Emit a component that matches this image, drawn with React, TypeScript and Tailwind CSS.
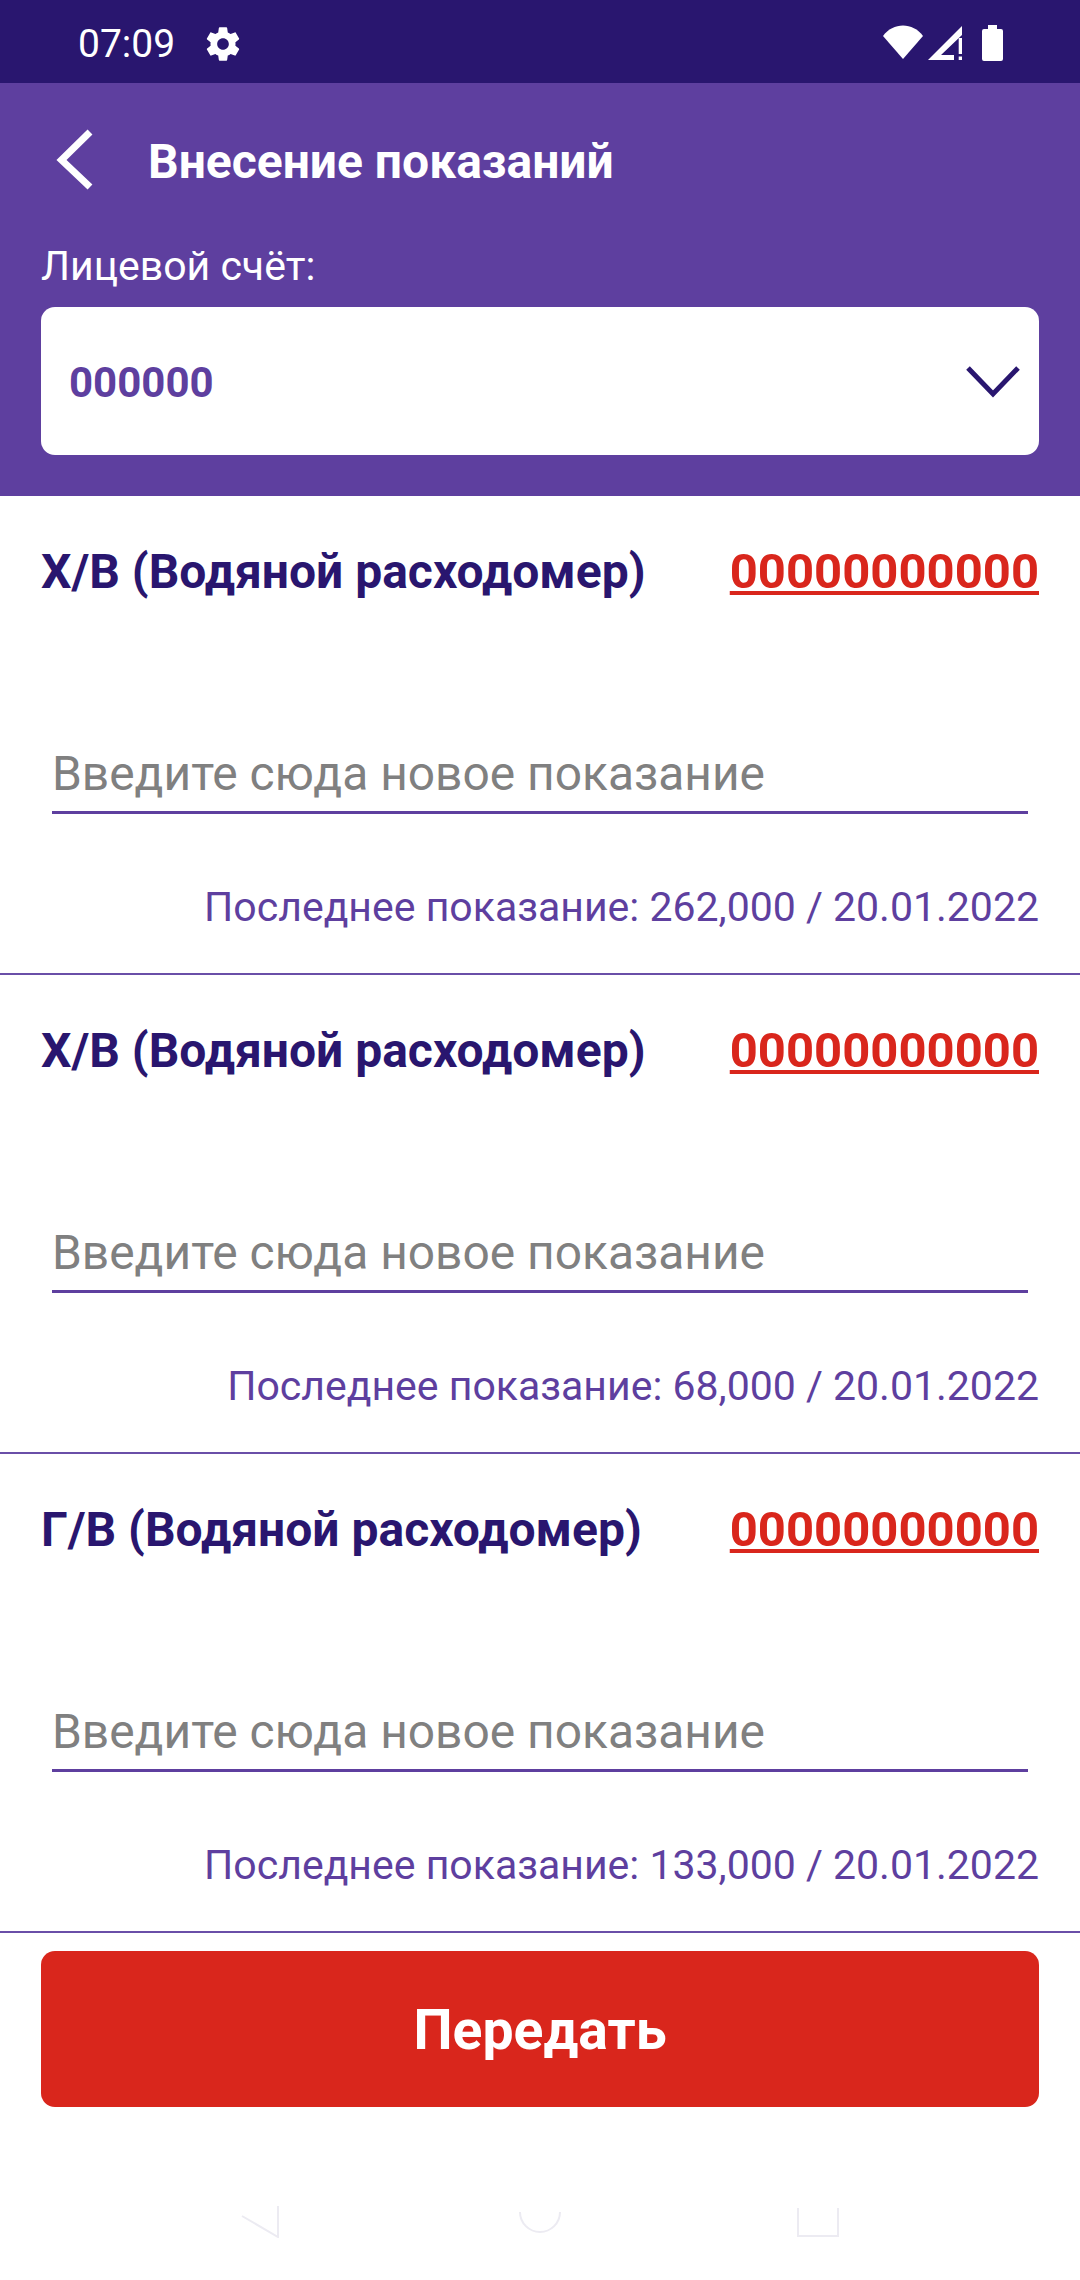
const meters = [
  { name: "Х/В (Водяной расходомер)", last: "262,000 / 20.01.2022" },
  { name: "Х/В (Водяной расходомер)", last: "68,000 / 20.01.2022" },
  { name: "Г/В (Водяной расходомер)", last: "133,000 / 20.01.2022" },
];

function StatusBar() {
  return (
    <div className="flex h-[83px] items-center justify-between bg-[#29166f] pl-[78px] pr-[77px] text-white">
      <div className="mt-[5px] flex items-center gap-[28px]">
        <span className="text-[39px] leading-none">07:09</span>
        <svg width="40" height="40" viewBox="0 0 24 24" fill="#fff">
          <path d="M19.43 12.98c.04-.32.07-.64.07-.98s-.03-.66-.07-.98l2.11-1.65c.19-.15.24-.42.12-.64l-2-3.46c-.12-.22-.39-.3-.61-.22l-2.49 1c-.52-.4-1.08-.73-1.69-.98l-.38-2.65C14.46 2.18 14.25 2 14 2h-4c-.25 0-.46.18-.49.42l-.38 2.65c-.61.25-1.17.59-1.69.98l-2.49-1c-.23-.09-.49 0-.61.22l-2 3.46c-.13.22-.07.49.12.64l2.11 1.65c-.04.32-.07.65-.07.98s.03.66.07.98l-2.11 1.65c-.19.15-.24.42-.12.64l2 3.46c.12.22.39.3.61.22l2.49-1c.52.4 1.08.73 1.69.98l.38 2.65c.03.24.24.42.49.42h4c.25 0 .46-.18.49-.42l.38-2.65c.61-.25 1.17-.59 1.69-.98l2.49 1c.23.09.49 0 .61-.22l2-3.46c.12-.22.07-.49-.12-.64l-2.11-1.65zM12 15.5c-1.93 0-3.5-1.57-3.5-3.5s1.57-3.5 3.5-3.5 3.5 1.57 3.5 3.5-1.57 3.5-3.5 3.5z" />
        </svg>
      </div>
      <svg width="120" height="36" viewBox="0 0 120 36" fill="#fff" className="mt-[3px]">
        <path d="M0 11 C10 -3 30 -3 40 11 L20 34 Z" />
        <path d="M45 35 L79 1 V10 L58 30 H71 V35 Z" />
        <rect x="75.7" y="13" width="3.3" height="16" />
        <rect x="75.7" y="31.5" width="3.3" height="3.5" />
        <path d="M99 6 a2 2 0 0 1 2 -2 h4 V0 h9 V4 h4 a2 2 0 0 1 2 2 V34 a2 2 0 0 1 -2 2 H101 a2 2 0 0 1 -2 -2 Z" />
      </svg>
    </div>
  );
}

function Header() {
  return (
    <div className="bg-[#5e3f9f] px-[41px] pb-[41px]">
      <div className="flex h-[154px] items-center">
        <svg width="40" height="62" viewBox="0 0 40 62" fill="none" stroke="#fff" strokeWidth="7" className="ml-[14px]">
          <path d="M35 3 L6.5 31 L35 58" />
        </svg>
        <span className="ml-[53px] pt-[3px] text-[48px] font-bold text-white">Внесение показаний</span>
      </div>
      <div className="mt-[6px] text-[41px] leading-[46px] text-white">Лицевой счёт:</div>
      <div className="mt-[18px] flex h-[148px] items-center justify-between rounded-[14px] bg-white pl-[28px] pr-[19px] pt-[2px]">
        <span className="text-[42px] font-bold text-[#5e3f9f]">000000</span>
        <svg width="54" height="32" viewBox="0 0 54 32" fill="none" stroke="#29166f" strokeWidth="5">
          <path d="M2 2 L27 28 L52 2" />
        </svg>
      </div>
    </div>
  );
}

function MeterRow({ name, last }: { name: string; last: string }) {
  return (
    <div className="h-[479px] border-b-2 border-[#6a4fa8] px-[41px] pt-[51px]">
      <div className="flex items-center justify-between">
        <span className="text-[48px] leading-[50px] font-bold text-[#29166f]">{name}</span>
        <span className="text-[49px] leading-[50px] font-bold text-[#d9261c] underline">00000000000</span>
      </div>
      <div className="mx-[11px] mt-[140px]">
        <input
          className="h-[77px] w-full border-b-[3px] border-[#5e3f9f] bg-white text-[47.9px] text-[#29166f] outline-none placeholder:text-[#808080]"
          placeholder="Введите сюда новое показание"
          readOnly
        />
      </div>
      <div className="mt-[70px] text-right text-[41px] leading-[46px] text-[#5e3f9f]">Последнее показание: {last}</div>
    </div>
  );
}

export default function App() {
  return (
    <div className="flex h-[2280px] w-[1080px] flex-col overflow-hidden bg-white font-['Roboto',sans-serif]">
      <StatusBar />
      <Header />
      {meters.map((meter, index) => (
        <MeterRow key={index} name={meter.name} last={meter.last} />
      ))}
      <div className="px-[41px] pt-[18px]">
        <button className="h-[156px] w-full rounded-[14px] bg-[#d9261c] pt-[4px] text-[55.3px] font-bold text-white" type="button">
          Передать
        </button>
      </div>
      <div className="mt-[91px] flex justify-center gap-[234px]">
        <svg width="44" height="40" viewBox="0 0 44 40" fill="none">
          <path d="M2 18 L38 39 V8" stroke="#ecebf2" strokeWidth="2" />
        </svg>
        <svg width="44" height="40" viewBox="0 0 44 40" fill="none">
          <path d="M2 14 A20 20 0 0 0 42 14" stroke="#ecebf2" strokeWidth="2" />
        </svg>
        <svg width="44" height="40" viewBox="0 0 44 40" fill="none">
          <path d="M2 10 V38 H42 V10" stroke="#ecebf2" strokeWidth="2" />
        </svg>
      </div>
    </div>
  );
}
